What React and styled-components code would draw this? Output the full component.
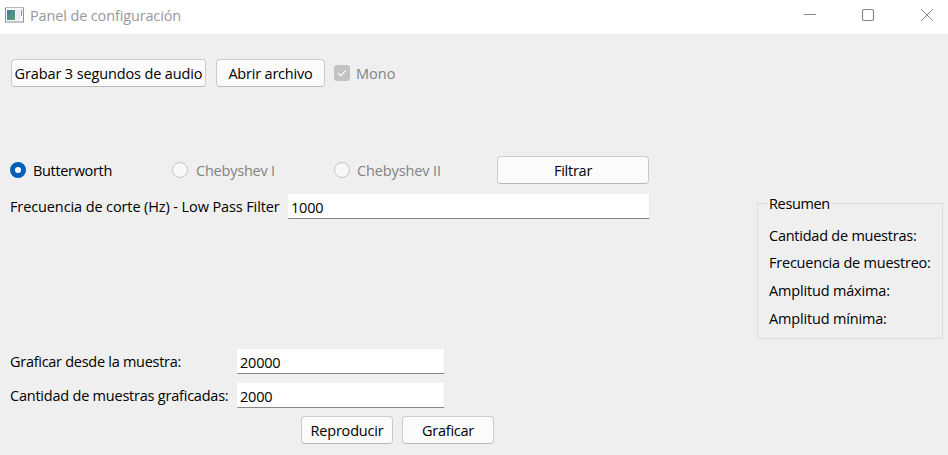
import React from "react";
import styled, { createGlobalStyle } from "styled-components";

const GlobalStyle = createGlobalStyle`
  *, *::before, *::after { box-sizing: border-box; }
  body {
    margin: 0;
    background: #efefef;
    font-family: "Open Sans", "Noto Sans", sans-serif;
    font-size: 14.5px;
    color: #000;
    overflow: hidden;
  }
`;

const Window = styled.div`
  width: 948px;
  height: 455px;
  display: flex;
  flex-direction: column;
  background: #efefef;
`;

const TitleBar = styled.header`
  height: 34px;
  flex: none;
  display: flex;
  align-items: flex-start;
  padding: 0 0 0 5px;
  background: #fff;
`;

const AppIcon = styled.svg`
  display: block;
  margin-top: 7px;
`;

const Title = styled.h1`
  margin: 6px auto 0 6px;
  font-size: 14.5px;
  font-weight: 400;
  line-height: 20px;
  color: #999;
  white-space: nowrap;
`;

const WindowControls = styled.svg`
  display: block;
`;

const Text = styled.span`
  white-space: nowrap;
  line-height: 20px;
  letter-spacing: ${(p) => p.$track || 0}px;
`;

const Content = styled.main`
  flex: 1;
  display: flex;
  justify-content: space-between;
  padding: 25px 5px 0 10px;
`;

const Controls = styled.div`
  width: 639px;
  display: flex;
  flex-direction: column;
`;

const Row = styled.div`
  display: flex;
  align-items: center;
  height: ${(p) => p.$height}px;
  margin-bottom: ${(p) => p.$after || 0}px;
  padding-left: ${(p) => p.$indent || 0}px;
  gap: ${(p) => p.$gap || 0}px;
`;

const Button = styled.button`
  flex: none;
  width: ${(p) => p.$width}px;
  height: 28px;
  display: flex;
  align-items: center;
  justify-content: center;
  padding: 1px 0 0;
  border: 1px solid #cbcbcb;
  border-bottom-color: #bababa;
  border-radius: 4px;
  background: #fbfbfb;
  font: inherit;
  color: #000;
`;

const Option = styled.label`
  flex: none;
  width: ${(p) => p.$width}px;
  display: flex;
  align-items: center;
  gap: ${(p) => p.$gap || 7}px;
  color: ${(p) => (p.$disabled ? "#838383" : "#000")};

  ${Text} {
    padding-top: 2px;
  }
`;

const Radio = styled.span`
  flex: none;
  width: 16px;
  height: 16px;
  border-radius: 50%;
  border: ${(p) => (p.$checked ? "5px solid #005fb8" : "1px solid #c6c6c6")};
  background: ${(p) => (p.$checked ? "#fff" : "#f8f8f8")};
`;

const FieldLabel = styled.label`
  flex: none;
  width: ${(p) => p.$width}px;
  display: flex;
`;

const Field = styled.input`
  flex: none;
  width: ${(p) => p.$width}px;
  height: 25px;
  padding: 3px 3px 0;
  border: 0;
  border-right: 1px solid #e8e8e8;
  border-bottom: 1px solid #868686;
  border-radius: 1px;
  outline: 0;
  background: #fff;
  font: inherit;
  letter-spacing: -0.2px;
  color: #000;
`;

const Summary = styled.fieldset`
  width: 186px;
  height: 146px;
  margin: 134px 0 0;
  padding: 8px 0 0 12px;
  border: 1px solid #dcdcdc;
  min-width: 0;
`;

const Legend = styled.legend`
  height: 21px;
  margin-left: -2px;
  padding: 1px 2px 0 1px;
  line-height: 20px;
`;

const SummaryList = styled.div`
  display: grid;
  margin-left: -1px;
  grid-auto-rows: 27.6px;
  align-items: center;
`;

function Check() {
  return (
    <svg width="16" height="16" viewBox="0 0 16 16">
      <rect width="16" height="16" rx="3" fill="#c3c3c3" />
      <path d="M4 8l2.7 2.7L12 5.4" fill="none" stroke="#fff" strokeWidth="1.1" />
    </svg>
  );
}

export default function App() {
  return (
    <>
      <GlobalStyle />
      <Window>
        <TitleBar>
          <AppIcon width="19" height="16" viewBox="0 0 19 16">
            <defs>
              <linearGradient id="screen" x1="0" y1="0" x2="1" y2="1">
                <stop offset="0" stopColor="#427b9b" />
                <stop offset="1" stopColor="#5ba477" />
              </linearGradient>
            </defs>
            <rect x="0.5" y="0.5" width="18" height="14.5" fill="#f7f8f8" stroke="#8b9196" />
            <path d="M0 .5h19" stroke="#b4b9be" />
            <rect x="2" y="3" width="8" height="10" fill="url(#screen)" />
            <rect x="11" y="3" width="4" height="10" fill="#e8edf0" />
            <path d="M16.5 3v6" stroke="#5c9e87" />
          </AppIcon>
          <Title><Text $track={-0.14}>Panel de configuración</Text></Title>
          <WindowControls width="150" height="34" viewBox="798 0 150 34" fill="none" stroke="#858585">
            <path d="M804 14.5h12" />
            <rect x="862.5" y="9.5" width="11" height="11" rx="1.5" strokeWidth="1.2" />
            <path d="M921 9l12 12M933 9l-12 12" />
          </WindowControls>
        </TitleBar>
        <Content>
          <Controls>
            <Row $height={28} $after={69} $indent={1}>
              <Button $width={195}><Text $track={-0.13}>Grabar 3 segundos de audio</Text></Button>
              <Row $height={28} $indent={10} $gap={9}>
                <Button $width={109}><Text $track={-0.2}>Abrir archivo</Text></Button>
                <Option $width={70} $gap={6} $disabled><Check /><Text>Mono</Text></Option>
              </Row>
            </Row>
            <Row $height={28} $after={10}>
              <Option $width={162}><Radio $checked /><Text $track={-0.33}>Butterworth</Text></Option>
              <Option $width={162} $gap={8} $disabled><Radio /><Text $track={-0.22}>Chebyshev I</Text></Option>
              <Option $width={163} $disabled><Radio /><Text $track={-0.12}>Chebyshev II</Text></Option>
              <Button $width={152}><Text $track={-0.25}>Filtrar</Text></Button>
            </Row>
            <Row $height={25} $after={130}>
              <FieldLabel $width={278}><Text $track={-0.11}>Frecuencia de corte (Hz) - Low Pass Filter</Text></FieldLabel>
              <Field $width={362} defaultValue="1000" />
            </Row>
            <Row $height={25} $after={9}>
              <FieldLabel $width={227}><Text $track={-0.28}>Graficar desde la muestra:</Text></FieldLabel>
              <Field $width={208} defaultValue="20000" />
            </Row>
            <Row $height={25} $after={8}>
              <FieldLabel $width={227}><Text $track={-0.22}>Cantidad de muestras graficadas:</Text></FieldLabel>
              <Field $width={208} defaultValue="2000" />
            </Row>
            <Row $height={28} $indent={291} $gap={9}>
              <Button $width={92}><Text $track={-0.2}>Reproducir</Text></Button>
              <Button $width={92}><Text $track={-0.25}>Graficar</Text></Button>
            </Row>
          </Controls>
          <Summary>
            <Legend><Text $track={-0.35}>Resumen</Text></Legend>
            <SummaryList>
              <Text $track={-0.24}>Cantidad de muestras:</Text>
              <Text $track={-0.22}>Frecuencia de muestreo:</Text>
              <Text $track={-0.17}>Amplitud máxima:</Text>
              <Text $track={-0.17}>Amplitud mínima:</Text>
            </SummaryList>
          </Summary>
        </Content>
      </Window>
    </>
  );
}
